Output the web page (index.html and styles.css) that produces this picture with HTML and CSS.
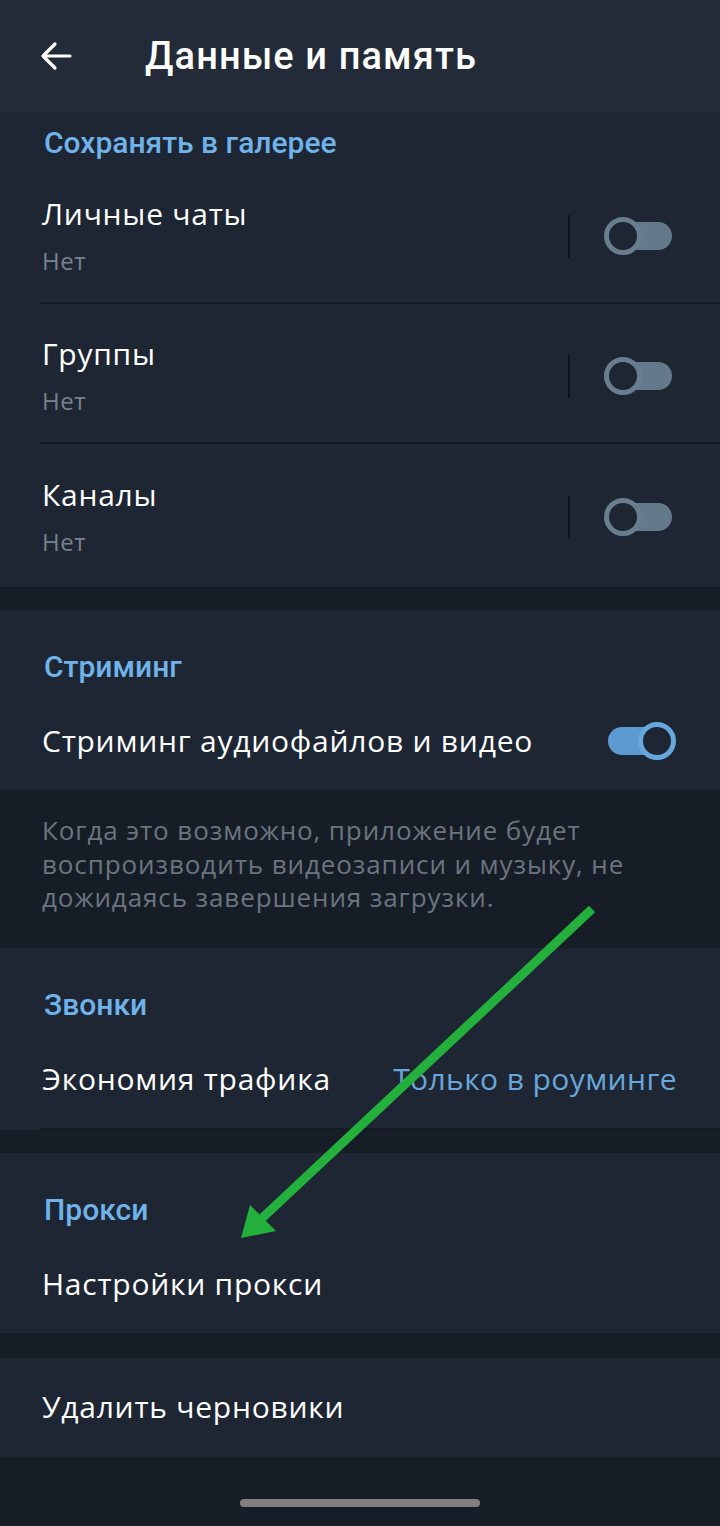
FILE: index.html
```html
<!DOCTYPE html>
<html lang="ru">
<head>
    <meta charset="UTF-8">
    <meta name="viewport" content="width=device-width, initial-scale=1.0">
    <title>Данные и память</title>
    <link rel="stylesheet" href="styles.css">
</head>
<body>
    <header class="topbar">
        <svg class="back" width="32" height="30" viewBox="0 0 32 30">
            <path d="M30 15 H3 M15 3 L3 15 L15 27" fill="none" stroke="#fff" stroke-width="3.2" stroke-linecap="round" stroke-linejoin="round"/>
        </svg>
        <h1>Данные и память</h1>
    </header>

    <main>
        <section class="group group-first">
            <div class="group-title">Сохранять в галерее</div>
            <div class="row row-two divided">
                <div class="row-text">
                    <div class="row-title">Личные чаты</div>
                    <div class="row-sub">Нет</div>
                </div>
                <span class="vsep"></span>
                <span class="switch"><span class="knob"></span></span>
            </div>
            <div class="row row-two divided">
                <div class="row-text">
                    <div class="row-title">Группы</div>
                    <div class="row-sub">Нет</div>
                </div>
                <span class="vsep"></span>
                <span class="switch"><span class="knob"></span></span>
            </div>
            <div class="row row-two">
                <div class="row-text">
                    <div class="row-title">Каналы</div>
                    <div class="row-sub">Нет</div>
                </div>
                <span class="vsep"></span>
                <span class="switch"><span class="knob"></span></span>
            </div>
        </section>

        <section class="group group-flush">
            <div class="group-title">Стриминг</div>
            <div class="row">
                <div class="row-title">Стриминг аудиофайлов и видео</div>
                <span class="switch on"><span class="knob"></span></span>
            </div>
        </section>
        <p class="info">Когда это возможно, приложение будет воспроизводить видеозаписи и музыку, не дожидаясь завершения загрузки.</p>

        <section class="group">
            <div class="group-title">Звонки</div>
            <div class="row divided">
                <div class="row-title">Экономия трафика</div>
                <span class="row-value">Только в роуминге</span>
            </div>
        </section>

        <section class="group">
            <div class="group-title">Прокси</div>
            <div class="row">
                <div class="row-title">Настройки прокси</div>
            </div>
        </section>

        <section class="group">
            <div class="row row-last">
                <div class="row-title">Удалить черновики</div>
            </div>
        </section>
    </main>

    <div class="home-bar"><span></span></div>

    <!-- green arrow drawn over the screenshot -->
    <svg class="annotation" width="720" height="1526" viewBox="0 0 720 1526">
        <line x1="592" y1="909" x2="258" y2="1222" stroke="#23b03c" stroke-width="9"/>
        <polygon points="241,1238 250,1205 276,1231" fill="#23b03c"/>
    </svg>
</body>
</html>
```

FILE: styles.css
```css
body {
    margin: 0;
    width: 720px;
    min-height: 1526px;
    background-color: #171d26;
    font-family: "Open Sans", "Noto Sans", sans-serif;
    color: #fff;
    position: relative;
}
.topbar {
    height: 112px;
    background-color: #232b38;
    display: flex;
    align-items: center;
}
.back {
    margin-left: 40px;
}
.topbar h1 {
    margin: 0 0 0 73px;
    font-family: Roboto, sans-serif;
    font-weight: 500;
    font-size: 38px;
    letter-spacing: 1.1px;
    color: #fff;
}
.group {
    background-color: #1d2632;
    margin-top: 23px;
}
.group-first {
    margin-top: 0;
    padding-bottom: 3px;
}
.group-flush + .info + .group {
    margin-top: 0;
}
.group:last-child {
    margin-top: 25px;
}
.group-title {
    padding: 36px 44px 4px;
    line-height: 42px;
    font-family: Roboto, sans-serif;
    font-weight: 500;
    font-size: 30px;
    color: #70b3ea;
}
.group-first .group-title {
    padding-top: 10px;
    padding-bottom: 0;
}
.row {
    box-sizing: border-box;
    height: 98px;
    margin-left: 40px;
    padding: 0 44px 0 2px;
    display: flex;
    align-items: center;
}
.row.divided {
    height: 100px;
    border-bottom: 2px solid #141a22;
}
.row-two,
.row-two.divided {
    height: 140px;
}
.row-two .row-text {
    margin-top: 8px;
}
.row-last {
    height: 99px;
}
.row-title {
    font-size: 30px;
    letter-spacing: 0.75px;
    line-height: 36px;
    color: #fff;
}
.row-sub {
    margin-top: 12px;
    font-size: 24px;
    letter-spacing: 0.6px;
    line-height: 34px;
    color: #78828c;
}
.row-value {
    margin-left: auto;
    margin-right: -1px;
    font-size: 30px;
    letter-spacing: 0.4px;
    color: #69a6dc;
}
.vsep {
    margin-left: auto;
    margin-top: 6px;
    width: 2px;
    height: 43px;
    background-color: #0f141b;
}
.switch {
    position: relative;
    width: 72px;
    height: 38px;
    margin-left: 34px;
    flex-shrink: 0;
}
.row-two .switch {
    margin-top: 6px;
}
.switch::before {
    content: "";
    position: absolute;
    left: 4px;
    right: 4px;
    top: 5px;
    height: 28px;
    border-radius: 14px;
    background-color: #647a8b;
}
.knob {
    position: absolute;
    left: 0;
    top: 0;
    box-sizing: border-box;
    width: 38px;
    height: 38px;
    border-radius: 50%;
    border: 5px solid #687e8f;
    background-color: #1d2632;
}
.switch.on {
    margin-left: auto;
}
.switch.on::before {
    background-color: #5c9ad1;
}
.switch.on .knob {
    left: auto;
    right: 0;
    border-color: #66a8de;
}
.info {
    margin: 0;
    padding: 24px 36px 33px 42px;
    font-size: 26px;
    letter-spacing: 0.9px;
    line-height: 33.5px;
    color: #6b7580;
    background-color: #171d26;
}
.home-bar {
    height: 69px;
    display: flex;
    justify-content: center;
    padding-top: 42px;
    box-sizing: border-box;
}
.home-bar span {
    width: 240px;
    height: 8px;
    border-radius: 4px;
    background-color: #7f7f7f;
}
.annotation {
    position: absolute;
    left: 0;
    top: 0;
    pointer-events: none;
}
```
